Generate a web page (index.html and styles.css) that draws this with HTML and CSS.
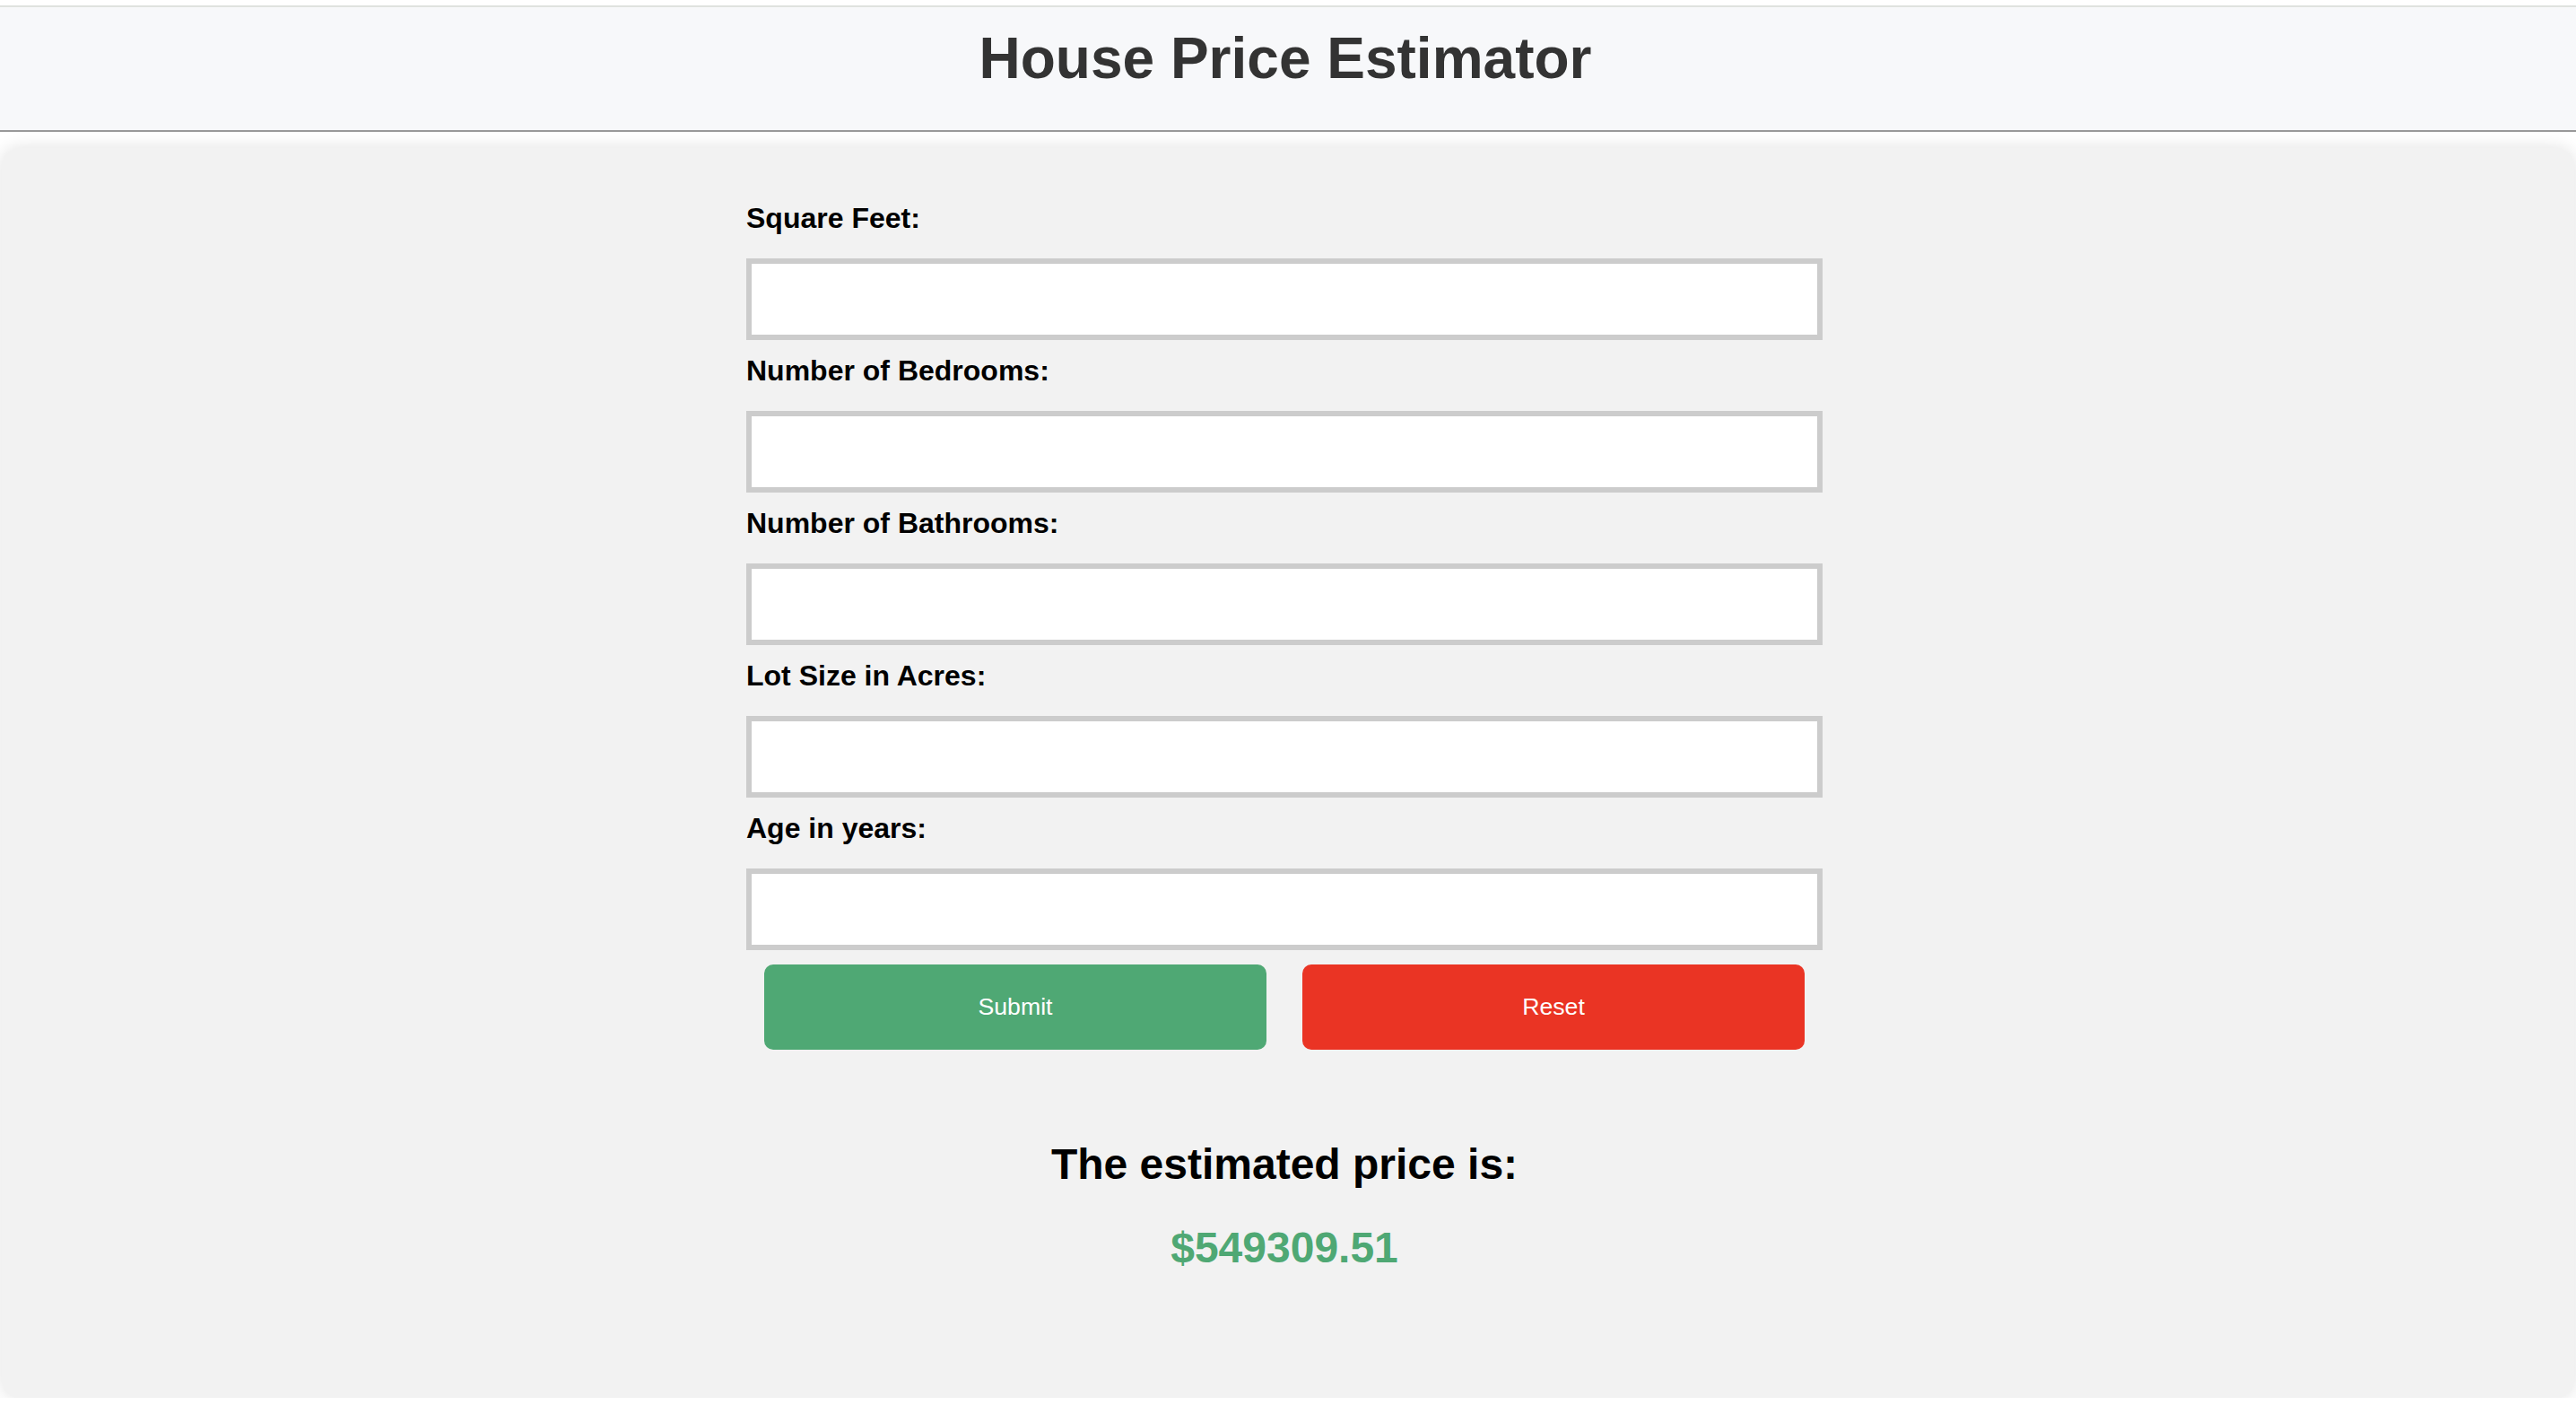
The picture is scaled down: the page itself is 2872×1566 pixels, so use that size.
FILE: index.html
```html
<!DOCTYPE html>
<html lang="en">
<head>
<meta charset="utf-8">
<title>House Price Estimator</title>
<link rel="stylesheet" href="styles.css">
</head>
<body>
  <header class="site-header">
    <h1 class="title">House Price Estimator</h1>
  </header>
  <main class="container">
    <form class="estimator">
      <label class="field-label" for="sqft">Square Feet:</label>
      <input class="field-input" id="sqft" type="text">
      <label class="field-label" for="beds">Number of Bedrooms:</label>
      <input class="field-input" id="beds" type="text">
      <label class="field-label" for="baths">Number of Bathrooms:</label>
      <input class="field-input" id="baths" type="text">
      <label class="field-label" for="lot">Lot Size in Acres:</label>
      <input class="field-input" id="lot" type="text">
      <label class="field-label" for="age">Age in years:</label>
      <input class="field-input" id="age" type="text">
      <div class="actions">
        <button class="btn btn-submit" type="button">Submit</button>
        <button class="btn btn-reset" type="button">Reset</button>
      </div>
      <h2 class="result-title">The estimated price is:</h2>
      <p class="result-value">$549309.51</p>
    </form>
  </main>
</body>
</html>
```

FILE: styles.css
```css
html, body {
  margin: 0;
  padding: 0;
  background: #ffffff;
  font-family: "Liberation Sans", Arial, Helvetica, sans-serif;
  overflow: hidden;
}

.site-header {
  margin-top: 6px;
  border-top: 2px solid #dfe2df;
  border-bottom: 2px solid #999999;
  background: #f7f8fa;
  padding: 20px 6px 43px 0;
}

.title {
  margin: 0;
  text-align: center;
  font-size: 64px;
  line-height: 74px;
  font-weight: bold;
  color: #333333;
}

.container {
  margin: 18px 2px 0;
  height: 1393px;
  padding: 59px 8px 0 0;
  box-sizing: border-box;
  background: #f2f2f2;
  border-radius: 20px;
  box-shadow: 0 0 20px rgba(0, 0, 0, 0.12);
}

.estimator {
  width: 1200px;
  margin: 0 auto;
  display: flex;
  flex-direction: column;
}

.field-label {
  display: block;
  margin: 15px 0 26px;
  font-size: 32px;
  line-height: 38px;
  font-weight: bold;
  color: #000000;
}

.field-label:first-child {
  margin-top: 0;
}

.field-input {
  display: block;
  box-sizing: border-box;
  width: 1200px;
  height: 91px;
  margin: 0;
  border: 6px solid #cccccc;
  border-radius: 0;
  background: #ffffff;
  padding: 0 16px;
  font-size: 32px;
  font-family: inherit;
  outline: none;
}

.actions {
  display: flex;
  gap: 40px;
  padding: 0 20px;
  margin-top: 16px;
}

.btn {
  flex: 1;
  height: 95px;
  border: none;
  border-radius: 10px;
  color: #ffffff;
  font-family: inherit;
  font-size: 26.67px;
  cursor: pointer;
}

.btn-submit {
  background: #4fa874;
}

.btn-reset {
  background: #ea3424;
}

.result-title {
  margin: 100px 0 0;
  text-align: center;
  font-size: 48px;
  line-height: 55px;
  font-weight: bold;
  color: #000000;
}

.result-value {
  margin: 38px 0 0;
  text-align: center;
  font-size: 48px;
  line-height: 55px;
  font-weight: bold;
  color: #4fa874;
}
```
